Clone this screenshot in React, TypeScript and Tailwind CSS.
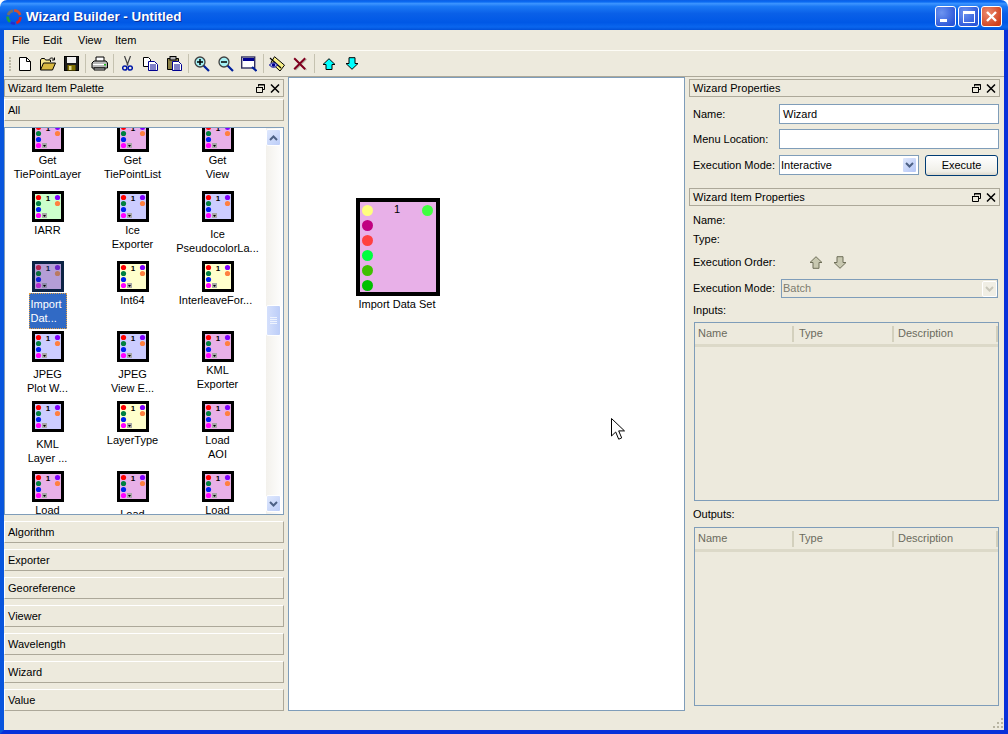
import React from "react";

const PINK = "#e8b0e8";
const BLUE = "#ccccff";
const GREEN = "#ccffcc";
const YELLOW = "#ffffcc";

function ItemIcon({ fill, selected }: { fill: string; selected?: boolean }) {
  const c = selected
    ? { border: "#0c2344", fill: "#b49ed6", r: "#b5254f", g: "#0b6e3e", b: "#1020d8", m: "#b52bd0", p: "#6a24c8", o: "#ba7a60", box: "#8c8ca8", t: "#0c2344" }
    : { border: "#000000", fill, r: "#ff0000", g: "#008040", b: "#0020f0", m: "#ff00ff", p: "#8000ff", o: "#ff8040", box: "#a8a8a8", t: "#000000" };
  return (
    <svg width="32" height="31" viewBox="0 0 32 31" className="block shrink-0 mb-[1px]">
      <rect x="1.5" y="1.5" width="29" height="28" fill={c.fill} stroke={c.border} strokeWidth="3" />
      <circle cx="6.5" cy="6.5" r="2.6" fill={c.r} />
      <circle cx="6.5" cy="12.5" r="2.6" fill={c.g} />
      <circle cx="6.5" cy="18.5" r="2.6" fill={c.b} />
      <circle cx="6.5" cy="24.5" r="2.6" fill={c.m} />
      <circle cx="25.5" cy="6.5" r="2.6" fill={c.p} />
      <circle cx="25.5" cy="12.5" r="2.6" fill={c.o} />
      <rect x="10" y="22" width="5" height="5" fill={c.box} />
      <path d="M11 24h3l-1.5 2z" fill="#000" />
      <text x="16" y="9.5" fontSize="8" fontWeight="700" textAnchor="middle" fill={c.t} fontFamily="'Liberation Sans',sans-serif">1</text>
    </svg>
  );
}

type Item = { fill: string; lines: string[]; low?: boolean; selected?: boolean; shift?: boolean };
const items: Item[] = [
  { fill: PINK, lines: ["Get", "TiePointLayer"] },
  { fill: PINK, lines: ["Get", "TiePointList"] },
  { fill: PINK, lines: ["Get", "View"] },
  { fill: GREEN, lines: ["IARR"] },
  { fill: BLUE, lines: ["Ice", "Exporter"] },
  { fill: BLUE, lines: ["Ice", "PseudocolorLa..."], low: true },
  { fill: BLUE, lines: ["Import", "Dat..."], selected: true },
  { fill: YELLOW, lines: ["Int64"] },
  { fill: YELLOW, lines: ["InterleaveFor..."], shift: true },
  { fill: BLUE, lines: ["JPEG", "Plot W..."], low: true },
  { fill: BLUE, lines: ["JPEG", "View E..."], low: true },
  { fill: PINK, lines: ["KML", "Exporter"] },
  { fill: BLUE, lines: ["KML", "Layer ..."], low: true },
  { fill: YELLOW, lines: ["LayerType"] },
  { fill: PINK, lines: ["Load", "AOI"] },
  { fill: PINK, lines: ["Load"] },
  { fill: PINK, lines: ["Load"], low: true },
  { fill: PINK, lines: ["Load"] },
];

function PaletteItem({ item }: { item: Item }) {
  return (
    <div className="h-[70px] flex flex-col items-center">
      <ItemIcon fill={item.fill} selected={item.selected} />
      {item.selected ? (
        <div className="w-[38px] px-[2px] py-[4px] bg-[#316ac5] text-white outline-1 outline-dotted outline-offset-[-1px] outline-[#e8a040] leading-[14px]">
          {item.lines.map((l) => (
            <div key={l}>{l}</div>
          ))}
        </div>
      ) : (
        <div className={`text-center leading-[14px] whitespace-nowrap ${item.low ? "pt-[4px]" : ""} ${item.shift ? "mr-[4px]" : ""}`}>
          {item.lines.map((l) => (
            <div key={l}>{l}</div>
          ))}
        </div>
      )}
    </div>
  );
}

function DockButtons() {
  return (
    <div className="flex items-center gap-[5px] pr-[3px]">
      <svg width="9" height="9" viewBox="0 0 9 9">
        <path d="M2.5 2.5V.5h6v5h-2M.5 3.5h6v5h-6z" fill="none" stroke="#000" />
        <path d="M2 1h7M0 3.5h7" stroke="#000" />
      </svg>
      <svg width="10" height="9" viewBox="0 0 10 9">
        <path d="M1 .5l8 8M9 .5l-8 8" stroke="#000" strokeWidth="1.5" />
      </svg>
    </div>
  );
}

function DockTitle({ title, className }: { title: string; className?: string }) {
  return (
    <div className={`h-[18px] shrink-0 flex items-center justify-between pl-[3px] border border-[#aca899] ${className ?? ""}`}>
      <span>{title}</span>
      <DockButtons />
    </div>
  );
}

function ToolboxTab({ label, className }: { label: string; className?: string }) {
  return (
    <div className={`h-[22px] shrink-0 flex items-center pl-[3px] border border-t-white border-l-white border-b-[#aca899] border-r-[#aca899] ${className ?? ""}`}>
      {label}
    </div>
  );
}

function ScrollBtn({ up }: { up?: boolean }) {
  return (
    <div className="h-[17px] w-[15px] shrink-0 rounded-[2px] border border-white bg-[linear-gradient(135deg,#dfe8fd,#bccdf8)] flex items-center justify-center">
      <svg width="9" height="6" viewBox="0 0 9 6">
        <path d={up ? "M1 5l3.5-3.5L8 5" : "M1 1l3.5 3.5L8 1"} fill="none" stroke="#4d6185" strokeWidth="2" />
      </svg>
    </div>
  );
}

function Chevron({ disabled }: { disabled?: boolean }) {
  return (
    <div className={`w-[15px] h-[16px] rounded-[2px] border border-white flex items-center justify-center ${disabled ? "bg-[#f0eee4]" : "bg-[linear-gradient(135deg,#dfe8fd,#b4c6f6)]"}`}>
      <svg width="9" height="6" viewBox="0 0 9 6">
        <path d="M1 1l3.5 3.5L8 1" fill="none" stroke={disabled ? "#c9c7ba" : "#4d6185"} strokeWidth="2" />
      </svg>
    </div>
  );
}

function ToolBtn({ children }: { children: React.ReactNode }) {
  return <div className="w-[23.25px] h-full flex items-center justify-center shrink-0">{children}</div>;
}
function ToolSep() {
  return (
    <div className="w-[5px] h-full flex items-center justify-center shrink-0">
      <div className="w-[1px] h-[19px] bg-[#c5c2b0]" />
    </div>
  );
}

const Ico = ({ children, w = 16, h = 16 }: { children: React.ReactNode; w?: number; h?: number }) => (
  <svg width={w} height={h} viewBox={`0 0 ${w} ${h}`} className="block">{children}</svg>
);

function Magnifier({ glyph }: { glyph: "plus" | "minus" }) {
  return (
    <Ico>
      <path d="M9.5 9.5l5.5 5.5" stroke="#00209c" strokeWidth="2.2" />
      <circle cx="6" cy="6" r="5" fill="#a4f0f4" stroke="#404040" strokeWidth="1.3" />
      <path d="M3 6h6" stroke="#000" strokeWidth="1.5" />
      {glyph === "plus" && <path d="M6 3v6" stroke="#000" strokeWidth="1.5" />}
    </Ico>
  );
}

function Toolbar() {
  return (
    <div className="h-[27px] shrink-0 flex items-center border-t border-t-[#fdfcf6] border-b border-b-[#aca899] pl-[4px]">
      <div className="w-[5px] h-[16px] shrink-0 flex flex-col justify-between py-[1px] pl-[1px]">
        {[0, 1, 2, 3, 4].map((i) => (
          <div key={i} className="w-[2px] h-[2px] bg-[#bdbaa8]" />
        ))}
      </div>
      <ToolBtn>
        <Ico w={12} h={14}>
          <path d="M.5.5h7l4 4v9h-11z" fill="#fff" stroke="#000" />
          <path d="M7.5.5v4h4" fill="none" stroke="#000" />
        </Ico>
      </ToolBtn>
      <ToolBtn>
        <Ico w={16} h={14}>
          <path d="M.5 13V3l1-1.5h3l1 1.5h5v2" fill="#f7e68a" stroke="#000" />
          <path d="M.5 13l3-7h12l-3 7z" fill="#d8b840" stroke="#000" />
          <path d="M9 2.5c1.5-2 4-2 5 0M14.5 .5v2.5h-2.5" fill="none" stroke="#000" />
        </Ico>
      </ToolBtn>
      <ToolBtn>
        <Ico w={15} h={15}>
          <rect x=".5" y=".5" width="14" height="14" fill="#1c1c1c" stroke="#000" />
          <rect x="3" y="1" width="9" height="6" fill="#f0f0f0" />
          <rect x="3.5" y="9" width="8" height="5.5" fill="#807000" />
          <rect x="5" y="10" width="2.5" height="4" fill="#e0d890" />
        </Ico>
      </ToolBtn>
      <ToolSep />
      <ToolBtn>
        <Ico w={17} h={15}>
          <path d="M5 6V1h8v5" fill="#fff" stroke="#000" />
          <path d="M1 7l2-2h12l1.5 2v5H1z" fill="#b8b8b8" stroke="#000" />
          <path d="M3 12h11v2H3z" fill="#e0e0e0" stroke="#000" />
          <path d="M2 8.5h13" stroke="#fff" />
          <rect x="13" y="8" width="2" height="1.5" fill="#20c020" />
        </Ico>
      </ToolBtn>
      <ToolSep />
      <ToolBtn>
        <Ico w={11} h={15}>
          <path d="M2.5 0l3.5 9.5M8.5 0L5 9.5" stroke="#404040" fill="none" strokeWidth="1.2" />
          <circle cx="2.8" cy="12" r="2.1" fill="none" stroke="#0018a8" strokeWidth="1.5" />
          <circle cx="8.2" cy="12" r="2.1" fill="none" stroke="#0018a8" strokeWidth="1.5" />
        </Ico>
      </ToolBtn>
      <ToolBtn>
        <Ico w={15} h={14}>
          <path d="M.5.5h5l2 2v7h-7z" fill="#fff" stroke="#000" />
          <path d="M5.5 4.5h6l3 3v6h-9z" fill="#fff" stroke="#000090" />
          <path d="M7 8h6M7 10h6M7 12h6" stroke="#000090" />
        </Ico>
      </ToolBtn>
      <ToolBtn>
        <Ico w={15} h={15}>
          <path d="M.5 2.5h11v11H.5z" fill="#8c8248" stroke="#000" />
          <rect x="3" y=".5" width="6" height="3.5" fill="#b0b0b0" stroke="#000" />
          <path d="M5.5 5.5h6l3 3v6h-9z" fill="#fff" stroke="#000090" />
          <path d="M7 9h6M7 11h6M7 13h6" stroke="#000090" />
        </Ico>
      </ToolBtn>
      <ToolSep />
      <ToolBtn>
        <Magnifier glyph="plus" />
      </ToolBtn>
      <ToolBtn>
        <Magnifier glyph="minus" />
      </ToolBtn>
      <ToolBtn>
        <Ico>
          <rect x=".7" y="1" width="13" height="11" fill="#fff" stroke="#303060" strokeWidth="1.4" />
          <rect x="2" y="2" width="11" height="3" fill="#000090" />
          <path d="M11 11l4.5 4" stroke="#00209c" strokeWidth="2.2" />
        </Ico>
      </ToolBtn>
      <ToolSep />
      <ToolBtn>
        <Ico>
          <path d="M5.5.7l10 8.5-4.5 5.8-9-8.5z" fill="#f8f088" stroke="#000" />
          <path d="M1 2l11 10" stroke="#000" strokeWidth="1.2" />
          <path d="M.5 9c2-3 6-3 8 0-2 3-6 3-8 0z" fill="#c0c8f0" stroke="#000090" />
          <circle cx="4.5" cy="9" r="1.8" fill="#000090" />
        </Ico>
      </ToolBtn>
      <ToolBtn>
        <Ico w={14} h={14}>
          <path d="M2.5 2l11 11M13.5 2l-11 11" stroke="#b8b5a6" strokeWidth="1.4" />
          <path d="M1.2 1.2l11 11M12.2 1.2l-11 11" stroke="#800020" strokeWidth="2" />
        </Ico>
      </ToolBtn>
      <ToolSep />
      <ToolBtn>
        <Ico w={14} h={12}>
          <path d="M7 .7L13 6.5H10v5H4v-5H1z" fill="#00ffff" stroke="#000" />
        </Ico>
      </ToolBtn>
      <ToolBtn>
        <Ico w={14} h={13}>
          <path d="M7 12.3L13 6.5H10V.7H4v5.8H1z" fill="#00ffff" stroke="#000" />
        </Ico>
      </ToolBtn>
    </div>
  );
}

function TitleBar() {
  return (
    <div className="h-[30px] shrink-0 rounded-t-[7px] flex items-center justify-between pl-[6px] pr-[6px] pt-[3px] bg-[linear-gradient(180deg,#0a5ee6_0%,#0a6af2_6%,#3c94ff_12%,#1a78f4_22%,#0a60e8_45%,#0058e6_75%,#0a66ee_90%,#0050d8_100%)]">
      <div className="flex items-center gap-[4px]">
        <svg width="16" height="16" viewBox="0 0 16 16">
          <path d="M2 6a6.5 6.5 0 0 1 5-4.4" fill="none" stroke="#707070" strokeWidth="2.6" />
          <path d="M8 1.5a6.5 6.5 0 0 1 6.2 4.5" fill="none" stroke="#d05030" strokeWidth="2.6" />
          <path d="M14.4 8a6.5 6.5 0 0 1-4 6" fill="none" stroke="#e02020" strokeWidth="2.6" />
          <path d="M9 14.4a6.5 6.5 0 0 1-4-.8" fill="none" stroke="#2030d0" strokeWidth="2.6" />
          <path d="M4 12.8a6.5 6.5 0 0 1-2.4-5.3" fill="none" stroke="#20a040" strokeWidth="2.6" />
        </svg>
        <span className="text-white font-bold text-[13.4px] leading-none [text-shadow:1px_1px_0_#0a2f9c]">Wizard Builder - Untitled</span>
      </div>
      <div className="flex items-center gap-[2px]">
        <div className="w-[21px] h-[21px] rounded-[3px] border border-white bg-[radial-gradient(circle_at_30%_30%,#6d94f0,#2a55d8_80%)] flex items-end pl-[4px] pb-[4px]">
          <div className="w-[7px] h-[3px] bg-white" />
        </div>
        <div className="w-[21px] h-[21px] rounded-[3px] border border-white bg-[radial-gradient(circle_at_30%_30%,#6d94f0,#2a55d8_80%)] flex items-center justify-center">
          <div className="w-[12px] h-[12px] border border-white border-t-[3px]" />
        </div>
        <div className="w-[21px] h-[21px] rounded-[3px] border border-white bg-[radial-gradient(circle_at_30%_30%,#ec8a6e,#d0401c_80%)] flex items-center justify-center">
          <svg width="13" height="13" viewBox="0 0 13 13">
            <path d="M2 2l9 9M11 2l-9 9" stroke="#fff" strokeWidth="2.4" />
          </svg>
        </div>
      </div>
    </div>
  );
}

function TableBox({ className }: { className?: string }) {
  return (
    <div className={`w-[305px] ml-[5px] shrink-0 border border-[#7f9db9] flex flex-col ${className ?? ""}`}>
      <div className="h-[24px] shrink-0 flex items-center text-[#6b6a5e] border-b-[3px] border-b-[#dcd9c8]">
        <div className="w-[99px] h-[16px] pl-[3px] border-r-2 border-r-[#d3d0bd] flex items-center">Name</div>
        <div className="w-[100px] h-[16px] pl-[5px] border-r-2 border-r-[#d3d0bd] flex items-center">Type</div>
        <div className="w-[104px] h-[16px] pl-[4px] border-r-2 border-r-[#d3d0bd] flex items-center">Description</div>
      </div>
    </div>
  );
}

const inputBox = "border border-[#7f9db9] bg-white h-[20px] flex items-center pl-[3px]";

function RightPanel() {
  return (
    <div className="w-[315px] shrink-0 flex flex-col">
      <DockTitle title="Wizard Properties" className="mt-[2px] w-[311px]" />
      <div className="mt-[7px] h-[20px] flex items-center pl-[4px]">
        <span className="w-[86px]">Name:</span>
        <div className={`${inputBox} w-[220px]`}>Wizard</div>
      </div>
      <div className="mt-[5px] h-[20px] flex items-center pl-[4px]">
        <span className="w-[86px]">Menu Location:</span>
        <div className={`${inputBox} w-[220px]`} />
      </div>
      <div className="mt-[6px] h-[21px] flex items-start pl-[4px]">
        <span className="w-[86px] leading-[20px]">Execution Mode:</span>
        <div className="w-[140px] h-[20px] border border-[#7f9db9] bg-white flex items-center justify-between pl-[1px] pr-[1px]">
          <span>Interactive</span>
          <Chevron />
        </div>
        <div className="ml-[6px] w-[73px] h-[21px] rounded-[3px] border border-[#003c74] bg-[linear-gradient(180deg,#ffffff,#f0efe8_80%,#dcd8cc)] flex items-center justify-center">Execute</div>
      </div>
      <DockTitle title="Wizard Item Properties" className="mt-[12px] w-[311px]" />
      <div className="mt-[7px] h-[14px] flex items-center pl-[4px]">Name:</div>
      <div className="mt-[5px] h-[14px] flex items-center pl-[4px]">Type:</div>
      <div className="mt-[9px] h-[14px] flex items-center pl-[4px]">
        <span className="w-[116px]">Execution Order:</span>
        <svg width="14" height="13" viewBox="0 0 14 13" className="mr-[10px]">
          <path d="M7 .7L13 6.5H10v5.8H4V6.5H1z" fill="#c8c8b0" stroke="#6e6e58" />
        </svg>
        <svg width="14" height="13" viewBox="0 0 14 13">
          <path d="M7 12.3L13 6.5H10V.7H4v5.8H1z" fill="#c8c8b0" stroke="#6e6e58" />
        </svg>
      </div>
      <div className="mt-[10px] h-[19px] flex items-center pl-[4px]">
        <span className="w-[88px]">Execution Mode:</span>
        <div className="w-[217px] h-[19px] border border-[#7f9db9] flex items-center justify-between pl-[1px] text-[#7d7c70]">
          <span>Batch</span>
          <Chevron disabled />
        </div>
      </div>
      <div className="mt-[5px] h-[14px] flex items-center pl-[4px]">Inputs:</div>
      <TableBox className="mt-[5px] h-[179px]" />
      <div className="mt-[6px] h-[14px] flex items-center pl-[4px]">Outputs:</div>
      <TableBox className="mt-[6px] h-[179px]" />
    </div>
  );
}

function LeftPanel() {
  return (
    <div className="w-[280px] shrink-0 flex flex-col">
      <DockTitle title="Wizard Item Palette" className="mt-[2px]" />
      <ToolboxTab label="All" className="mt-[2px]" />
      <div className="mt-[6px] h-[388px] shrink-0 border border-[#7f9db9] bg-white flex overflow-hidden">
        <div className="w-[261px] shrink-0 overflow-hidden">
          <div className="grid grid-cols-[85px_85px_85px] mt-[-7px]">
            {items.map((it, i) => (
              <PaletteItem key={i} item={it} />
            ))}
          </div>
        </div>
        <div className="w-[17px] shrink-0 bg-[linear-gradient(90deg,#f3f1ec,#fefefe)] flex flex-col items-start pt-[1px] pb-[2px]">
          <ScrollBtn up />
          <div className="mt-[159px] w-[15px] h-[31px] rounded-[2px] border border-white bg-[linear-gradient(90deg,#d5e0fc,#bccdf8)] flex flex-col items-center justify-center gap-[1px]">
            {[0, 1, 2, 3].map((i) => (
              <div key={i} className="w-[7px] h-[1px] bg-[#eef3fe]" />
            ))}
          </div>
          <div className="flex-1" />
          <ScrollBtn />
        </div>
      </div>
      {["Algorithm", "Exporter", "Georeference", "Viewer", "Wavelength", "Wizard", "Value"].map((l) => (
        <ToolboxTab key={l} label={l} className="mt-[6px]" />
      ))}
    </div>
  );
}

function Canvas() {
  const dots = ["#ffff80", "#c00080", "#ff4040", "#00ff40", "#40c000", "#00c000"];
  return (
    <div className="relative w-[397px] h-[634px] shrink-0 border border-[#7f9db9] bg-white ml-[4px] mr-[4px]">
      <div className="absolute left-[67px] top-[120px] flex flex-col items-center w-[84px]">
        <div className="w-[84px] h-[98px] border-[4px] border-black bg-[#e8b0e8] relative">
          <div className="absolute left-[2px] top-[2.5px] flex flex-col gap-[4px]">
            {dots.map((d) => (
              <div key={d} className="w-[11px] h-[11px] rounded-full" style={{ backgroundColor: d }} />
            ))}
          </div>
          <div className="absolute left-[62px] top-[2.5px] w-[11px] h-[11px] rounded-full bg-[#40ff40]" />
          <div className="absolute left-0 right-[2px] top-[0px] text-center text-[11px] leading-[14px]">1</div>
        </div>
        <div className="whitespace-nowrap leading-[14px] mt-[1px] mr-[2px]">Import Data Set</div>
      </div>
      <svg width="14" height="23" viewBox="0 0 14 23" className="absolute left-[322px] top-[340px]">
        <path d="M.5.5v17.5l4.2-4 3 7.2 3-1.3-3-7h5.8z" fill="#fff" stroke="#000" />
      </svg>
    </div>
  );
}

export default function App() {
  return (
    <div className="w-[1008px] h-[734px] flex flex-col overflow-hidden bg-white text-[11px] text-black [font-family:'Liberation_Sans',sans-serif]">
      <TitleBar />
      <div className="h-[704px] flex flex-col bg-[#edeadd] border-l-[4px] border-r-[4px] border-b-[4px] border-l-[#0855dd] border-r-[#0831d9] border-b-[#0831d9]">
        <div className="h-[20px] shrink-0 flex items-center pl-[8px] gap-[16px]">
          {["File", "Edit", "View", "Item"].map((m, i) => (
            <span key={m} className={i === 0 ? "w-[15px]" : i === 1 ? "w-[19px]" : i === 2 ? "w-[21px]" : ""}>{m}</span>
          ))}
        </div>
        <Toolbar />
        <div className="h-[634px] shrink-0 flex">
          <LeftPanel />
          <Canvas />
          <RightPanel />
        </div>
        <div className="flex-1 flex items-end justify-end">
          <svg width="12" height="12" viewBox="0 0 12 12" fill="#b8b5a2">
            <rect x="9" y="0" width="2" height="2" />
            <rect x="5" y="4" width="2" height="2" />
            <rect x="9" y="4" width="2" height="2" />
            <rect x="1" y="8" width="2" height="2" />
            <rect x="5" y="8" width="2" height="2" />
            <rect x="9" y="8" width="2" height="2" />
          </svg>
        </div>
      </div>
    </div>
  );
}
